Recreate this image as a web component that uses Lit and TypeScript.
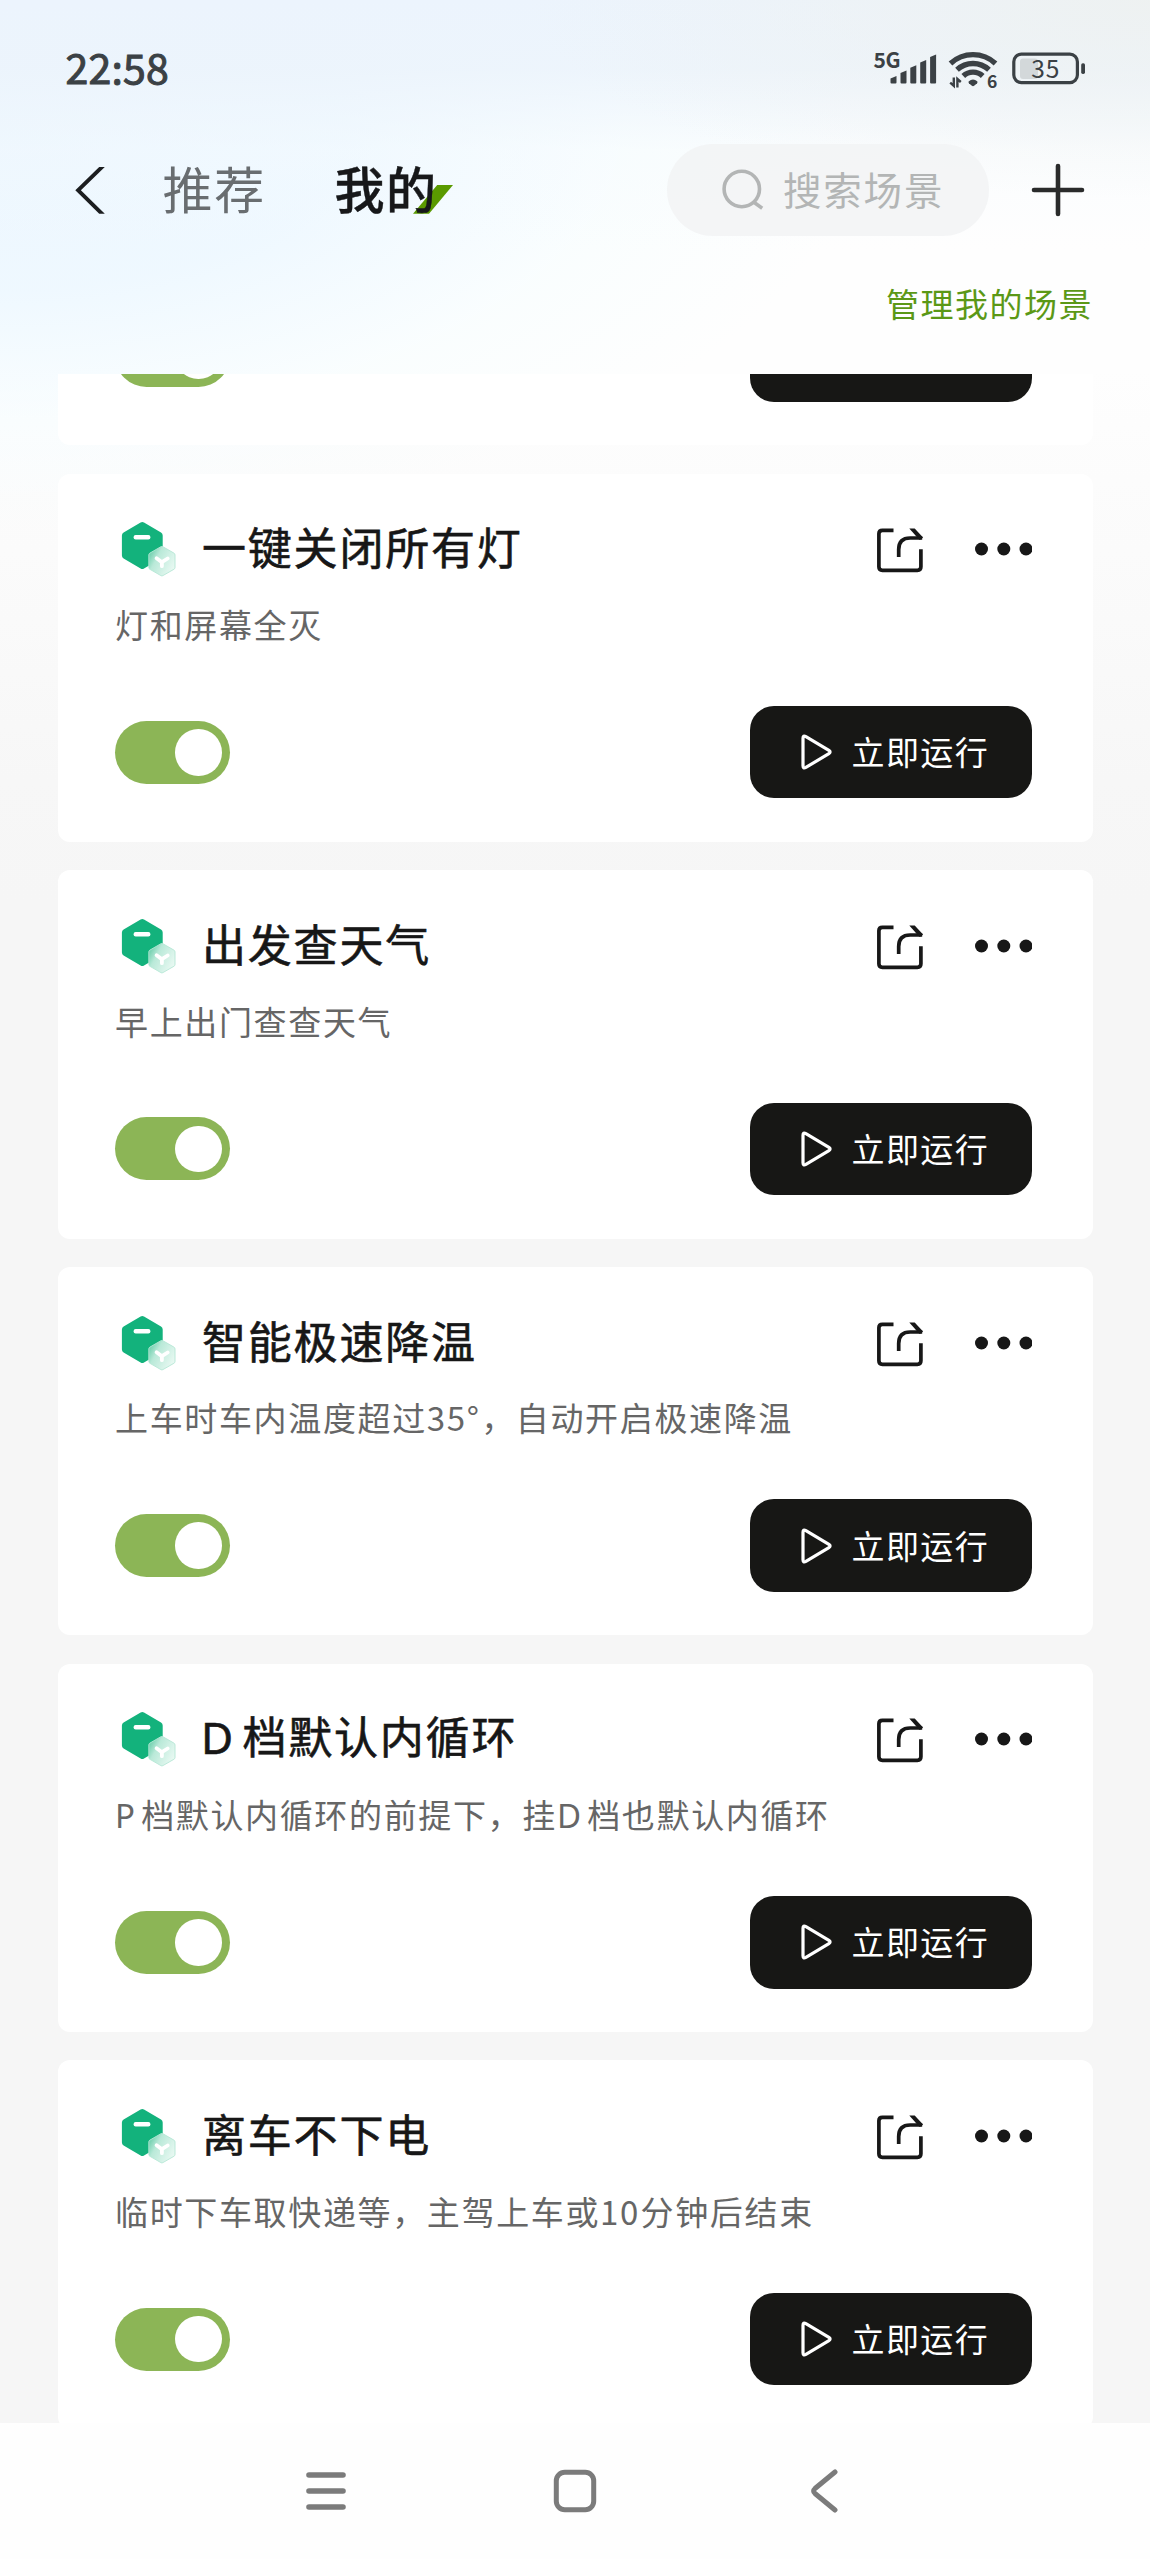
import { LitElement, html, css, svg, nothing } from "lit";
import { customElement, property } from "lit/decorators.js";

interface Scene {
  title: string;
  desc: string;
}

const SCENES: Scene[] = [
  { title: "一键关闭所有灯", desc: "灯和屏幕全灭" },
  { title: "出发查天气", desc: "早上出门查查天气" },
  { title: "智能极速降温", desc: "上车时车内温度超过35°，自动开启极速降温" },
  { title: "D档默认内循环", desc: "P档默认内循环的前提下，挂D档也默认内循环" },
  { title: "离车不下电", desc: "临时下车取快递等，主驾上车或10分钟后结束" },
];

// Letters and digits get their own spans so that they can be spaced apart from the Han text.
const mixed = (text: string) =>
  text
    .split(/([A-Z]+|[0-9°]+)/)
    .filter(Boolean)
    .map((run) =>
      /^[A-Z]/.test(run)
        ? html`<span class="letter">${run}</span>`
        : /^[0-9]/.test(run)
          ? html`<span class="digits">${run}</span>`
          : run
    );

const FONT = css`"Noto Sans CJK SC", "Noto Sans", sans-serif`;

@customElement("status-bar")
export class StatusBar extends LitElement {
  static styles = css`
    :host {
      display: flex;
      align-items: center;
      justify-content: space-between;
      height: 138px;
      padding: 0 62px 1px 65.5px;
      box-sizing: border-box;
      color: #3b4145;
      font-family: ${FONT};
    }
    .time {
      padding-bottom: 5px;
      font-size: 41px;
      letter-spacing: 0.2px;
      line-height: 48px;
      -webkit-text-stroke: 1px #3b4145;
    }
    svg {
      display: block;
    }
  `;
  render() {
    const bars = [
      [890.5, 76],
      [900.5, 70.5],
      [910.3, 65.3],
      [920.2, 60],
      [930.1, 54.5],
    ];
    return html`
      <span class="time">22:58</span>
      <svg width="218" height="48" viewBox="870 45 218 48" fill="#3b4145">
        <text x="873.5" y="67.5" font-size="21" font-weight="700" textLength="27">5G</text>
        ${bars.map(
          ([x, y]) => svg`<path d="M${x} 82.6V${y + 2.4}L${x + 6} ${y}V82.6a1 1 0 0 1-1 1h-4a1 1 0 0 1-1-1z" />`
        )}
        <g fill="none" stroke="#3b4145" stroke-width="5.4">
          <path d="M950.5 63.5a33 33 0 0 1 45 0" />
          <path d="M957 69.8a23.5 23.5 0 0 1 32 0" />
          <path d="M963.3 76a14 14 0 0 1 19.4 0" />
        </g>
        <path d="M968.6 81.6q4.4-4.4 8.8 0q.4.8-.3 1.6l-3 2.6q-1.1.8-2.2 0l-3-2.6q-.7-.8-.3-1.6z" />
        <path d="M950.2 82.6l3.6 3.2v-8.2M960.8 82l-3.4-3v8.4" fill="none" stroke="#3b4145" stroke-width="2.4" />
        <text x="987" y="88" font-size="17.5" font-weight="700">6</text>
        <rect x="1020" y="58.5" width="18" height="20.6" rx="3" fill="#d3d8da" />
        <rect x="1013.8" y="54.2" width="63.6" height="28.4" rx="7.5" fill="none" stroke="#3b4145" stroke-width="3.2" />
        <rect x="1081.2" y="63.3" width="3.8" height="10.6" rx="1.6" />
        <text x="1031.3" y="77.6" font-size="24.5" textLength="28">35</text>
      </svg>
    `;
  }
}

@customElement("page-header")
export class PageHeader extends LitElement {
  static styles = css`
    :host {
      display: block;
      height: 236.4px;
      font-family: ${FONT};
    }
    .bar {
      display: flex;
      align-items: center;
      height: 104px;
      padding: 0 65px 0 73px;
    }
    svg {
      display: block;
      flex: none;
    }
    .tab {
      padding-bottom: 6px;
      margin-left: 55.5px;
      font-size: 50px;
      letter-spacing: 1.7px;
      line-height: 60px;
      color: #696d70;
    }
    .tab.active {
      position: relative;
      margin-left: 68.5px;
      color: #17181a;
      font-weight: 500;
      -webkit-text-stroke: 0.4px #17181a;
    }
    .label {
      position: relative;
    }
    .accent {
      position: absolute;
      left: 79px;
      top: 28px;
    }
    .search {
      display: flex;
      align-items: center;
      box-sizing: border-box;
      width: 322px;
      height: 92px;
      padding-left: 54px;
      margin-left: auto;
      border-radius: 46px;
      background: rgba(242, 243, 244, 0.86);
      color: #b3b5b5;
      font-size: 38.5px;
      letter-spacing: 1.8px;
      line-height: 46px;
    }
    .search svg {
      margin-right: 18px;
    }
    .placeholder {
      padding-bottom: 4px;
    }
    .plus {
      margin-left: 42px;
    }
    .manage {
      padding: 37px 57px 0 0;
      text-align: right;
      font-size: 33px;
      letter-spacing: 1.5px;
      line-height: 48px;
      color: #5b9816;
    }
  `;
  render() {
    return html`
      <div class="bar">
        <svg width="34" height="50" viewBox="73 165 34 50">
          <path d="M99.2 167h5.6L80.9 190.3l23.9 23.4h-5.6L75.3 190.3z" fill="#1c1e20" />
        </svg>
        <span class="tab">推荐</span>
        <span class="tab active">
          <svg class="accent" width="42" height="29" viewBox="0 0 42 29">
            <path d="M24.2 0H40L16 28.7H0z" fill="#5a9a00" />
          </svg>
          <span class="label">我的</span>
        </span>
        <div class="search">
          <svg width="44" height="44" viewBox="721 168 44 44" fill="none" stroke="#b3b5b5" stroke-width="3.6">
            <circle cx="741.8" cy="189" r="17.7" />
            <path d="M753.2 201.8l9 6.4" />
          </svg>
          <span class="placeholder">搜索场景</span>
        </div>
        <svg class="plus" width="54" height="54" viewBox="0 0 54 54" stroke="#2a2b2b" stroke-width="4.6" stroke-linecap="round">
          <path d="M3 27h48M27 3v48" />
        </svg>
      </div>
      <div class="manage">管理我的场景</div>
    `;
  }
}

@customElement("scene-controls")
export class SceneControls extends LitElement {
  @property() label = "立即运行";

  static styles = css`
    :host {
      display: flex;
      align-items: center;
      justify-content: space-between;
      height: 92.4px;
      font-family: ${FONT};
    }
    .toggle {
      box-sizing: border-box;
      display: flex;
      justify-content: flex-end;
      align-items: center;
      width: 115px;
      height: 63px;
      padding-right: 8.5px;
      border-radius: 32px;
      background: #8cb556;
    }
    .knob {
      width: 46.6px;
      height: 46.6px;
      border-radius: 50%;
      background: #fff;
    }
    .run {
      box-sizing: border-box;
      display: flex;
      align-items: center;
      width: 282px;
      height: 92.4px;
      padding-left: 51px;
      border-radius: 24px;
      background: #171715;
      color: #fff;
      font-size: 33px;
      letter-spacing: 1.4px;
      line-height: 46px;
    }
    .text {
      padding-bottom: 2px;
    }
    svg {
      display: block;
      margin-right: 18.5px;
    }
  `;
  render() {
    return html`
      <div class="toggle"><div class="knob"></div></div>
      <div class="run">
        <svg width="32" height="38" viewBox="0.7 0 32 38">
          <path
            d="M2.7 5.2v27.6q0 3.2 2.9 1.6l23-13.8q2.4-1.6 0-3.2l-23-13.8q-2.9-1.6-2.9 1.6z"
            fill="none"
            stroke="#fff"
            stroke-width="3.2"
            stroke-linejoin="round"
          />
        </svg>
        ${this.label ? html`<span class="text">${this.label}</span>` : nothing}
      </div>
    `;
  }
}

@customElement("scene-card")
export class SceneCard extends LitElement {
  @property({ attribute: false }) scene!: Scene;

  static styles = css`
    :host {
      box-sizing: border-box;
      display: flex;
      flex-direction: column;
      flex: none;
      height: 368.4px;
      padding: 31.6px 60.5px 43.6px 57.5px;
      border-radius: 12px;
      background: #fff;
      font-family: ${FONT};
    }
    .head {
      display: flex;
      align-items: center;
      height: 84px;
    }
    svg {
      display: block;
      flex: none;
    }
    .badge {
      margin-left: -1.5px;
    }
    .title {
      flex: 1;
      margin-left: 24.5px;
      padding-bottom: 2px;
      font-size: 44px;
      letter-spacing: 1.8px;
      line-height: 60px;
      white-space: nowrap;
      color: #171717;
      -webkit-text-stroke: 0.6px #171717;
    }
    .letter {
      font-family: "Noto Sans", sans-serif;
    }
    .title .letter {
      margin: 0 7.5px 0 -1px;
    }
    .share {
      margin-top: 4px;
    }
    .more {
      margin-top: 4px;
      margin-left: 47.5px;
    }
    .desc {
      height: 48px;
      margin-top: 10.8px;
      font-size: 33px;
      letter-spacing: 1.65px;
      line-height: 48px;
      white-space: nowrap;
      color: #666;
    }
    .desc .letter {
      margin: 0 4.5px 0 0;
    }
    .desc .digits {
      margin-right: 0.5px;
    }
    scene-controls {
      margin-top: auto;
    }
  `;
  render() {
    return html`
      <div class="head">
        <svg class="badge" width="64" height="60" viewBox="115 517 64 60">
          <defs>
            <linearGradient id="glass" x1="0" y1="0" x2="1" y2="0.6">
              <stop offset="0" stop-color="#4fc49b" />
              <stop offset="0.4" stop-color="#b9e9d8" />
              <stop offset="1" stop-color="#e6f8f1" />
            </linearGradient>
          </defs>
          <path
            d="M141.6 522.6q1.7-1 3.4 0l17 10q1.7 1 1.7 3v20q0 2-1.7 3l-17 9.9q-1.7 1-3.4 0l-17-9.9q-1.7-1-1.7-3v-20q0-2 1.7-3z"
            fill="#13b27c"
          />
          <rect x="134.6" y="535" width="16.8" height="4.6" rx="2" fill="#fff" />
          <path
            d="M161.9 546.7q1-.6 2 0l11 6.4q1.1.6 1.1 1.8v12.6q0 1.2-1.1 1.8l-11 6.3q-1 .6-2 0l-11-6.3q-1.1-.6-1.1-1.8v-12.6q0-1.2 1.1-1.8z"
            fill="url(#glass)"
            stroke="#b4e6d5"
            stroke-width="0.9"
          />
          <path
            d="M157.6 558.2l5.3 4 5.8-3.7M162.9 562.2v4"
            fill="none"
            stroke="#fff"
            stroke-width="3.8"
            stroke-linecap="round"
            stroke-linejoin="round"
          />
        </svg>
        <div class="title">${mixed(this.scene.title)}</div>
        <svg class="share" width="52" height="52" viewBox="875 523 52 52" fill="none" stroke="#171717" stroke-width="3.7">
          <path d="M893.5 530.3H882.4q-3.5 0-3.5 3.5v33q0 3.5 3.5 3.5h35q3.5 0 3.5-3.5V549.2" />
          <path d="M898.7 557v-7.5q0-11.5 11.5-11.5h12" />
          <path d="M909.3 528.4h5.4l8.4 9.2-3 2.2h-.8z" fill="#171717" stroke="none" />
        </svg>
        <svg class="more" width="57.5" height="14" viewBox="0 0 57.5 14" fill="#171717">
          <circle cx="6.5" cy="7" r="6.5" />
          <circle cx="28.8" cy="7" r="6.5" />
          <circle cx="51" cy="7" r="6.5" />
        </svg>
      </div>
      <div class="desc">${mixed(this.scene.desc)}</div>
      <scene-controls></scene-controls>
    `;
  }
}

@customElement("nav-bar")
export class NavBar extends LitElement {
  static styles = css`
    :host {
      display: flex;
      align-items: center;
      box-sizing: border-box;
      height: 136px;
      padding-left: 305px;
      background: #fefefe;
    }
    svg {
      display: block;
    }
    .home {
      margin: 0 213px 0 206px;
    }
  `;
  render() {
    return html`
      <svg width="42" height="42" viewBox="305 2470 42 42" stroke="#7b7b7b" stroke-width="5.6" stroke-linecap="round">
        <path d="M309 2475h34M309 2491h34M309 2507h34" />
      </svg>
      <svg class="home" width="44" height="44" viewBox="0 0 44 44" fill="none" stroke="#7b7b7b" stroke-width="5">
        <rect x="3.3" y="3.3" width="37.4" height="37.4" rx="8.5" />
      </svg>
      <svg width="30" height="44" viewBox="0 0 30 44" fill="none" stroke="#7b7b7b" stroke-width="5" stroke-linecap="round">
        <path d="M25 3L5 19.5Q2.2 22 5 24.5L25 41" />
      </svg>
    `;
  }
}

@customElement("app-root")
export class AppRoot extends LitElement {
  static styles = css`
    :host {
      display: flex;
      flex-direction: column;
      width: 1150px;
      height: 2559px;
      overflow: hidden;
      background: radial-gradient(ellipse 620px 200px at 100% 0, rgba(238, 241, 240, 0.9), rgba(240, 243, 243, 0)),
        linear-gradient(
          180deg,
          rgba(236, 244, 253, 1) 0,
          rgba(236, 244, 252, 0.9) 70px,
          rgba(244, 250, 254, 0.35) 150px,
          rgba(255, 255, 255, 0) 250px
        ),
        radial-gradient(
          ellipse 860px 400px at 0 130px,
          rgba(236, 246, 254, 1) 0,
          rgba(238, 248, 255, 0.95) 40%,
          rgba(245, 253, 255, 0.5) 72%,
          rgba(254, 255, 255, 0) 100%
        ),
        linear-gradient(180deg, #fefefe 0, #fefefe 370px, #fcfcfc 480px, #fafafa 620px, #f7f7f7 780px, #f6f6f6 900px);
    }
    .list {
      flex: 1;
      min-height: 0;
      display: flex;
      flex-direction: column;
      gap: 28.3px;
      padding: 0 57.5px;
      overflow: hidden;
    }
    .scrolled {
      flex: none;
      box-sizing: border-box;
      display: flex;
      flex-direction: column;
      justify-content: flex-end;
      height: 71px;
      padding: 0 60.5px 43.6px 57.5px;
      overflow: hidden;
      border-radius: 0 0 12px 12px;
      background: #fff;
    }
    .scrolled scene-controls {
      flex: none;
    }
  `;
  render() {
    return html`
      <status-bar></status-bar>
      <page-header></page-header>
      <div class="list">
        <div class="scrolled"><scene-controls label=""></scene-controls></div>
        ${SCENES.map((scene) => html`<scene-card .scene=${scene}></scene-card>`)}
      </div>
      <nav-bar></nav-bar>
    `;
  }
}
